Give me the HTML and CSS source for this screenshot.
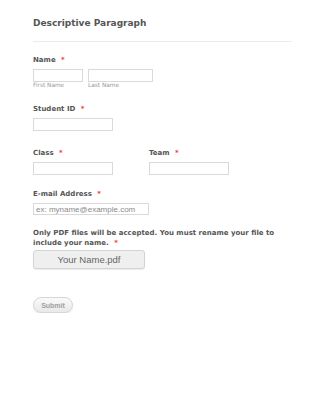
FILE: index.html
```html
<!DOCTYPE html>
<html lang="en">
<head>
  <meta charset="UTF-8">
  <meta name="viewport" content="width=device-width, initial-scale=1.0">
  <title>Descriptive Paragraph</title>
  <link rel="stylesheet" href="styles.css">
</head>
<body>
  <form class="form">
    <div class="form-header">
      <h1>Descriptive Paragraph</h1>
    </div>

    <div class="field field-name">
      <label class="label">Name <span class="req">*</span></label>
      <div class="name-row">
        <div class="sub">
          <input class="input input-first" type="text">
          <span class="sublabel">First Name</span>
        </div>
        <div class="sub">
          <input class="input input-last" type="text">
          <span class="sublabel">Last Name</span>
        </div>
      </div>
    </div>

    <div class="field field-id">
      <label class="label">Student ID <span class="req">*</span></label>
      <input class="input input-md" type="text">
    </div>

    <div class="field field-cols">
      <div class="col">
        <label class="label">Class <span class="req">*</span></label>
        <input class="input input-md" type="text">
      </div>
      <div class="col">
        <label class="label">Team <span class="req">*</span></label>
        <input class="input input-md" type="text">
      </div>
    </div>

    <div class="field field-email">
      <label class="label">E-mail Address <span class="req">*</span></label>
      <input class="input input-email" type="text" placeholder="ex: myname@example.com">
    </div>

    <div class="field field-file">
      <label class="label label-long">Only PDF files will be accepted. You must rename your file to include your name. <span class="req">*</span></label>
      <button class="file-btn" type="button">Your Name.pdf</button>
    </div>

    <div class="field field-submit">
      <button class="submit" type="button">Submit</button>
    </div>
  </form>
</body>
</html>
```

FILE: styles.css
```css
:root {
  --text: #555555;
  --muted: #9a9a9a;
  --border: #d9d9d9;
  --req: #f23a3c;
}
body {
  margin: 0;
  background: #ffffff;
  font-family: 'DejaVu Sans', Verdana, sans-serif;
  color: var(--text);
}
.form {
  width: 259px;
  padding: 17px 33px 0;
}
.form-header h1 {
  margin: 0;
  padding-bottom: 12px;
  font-size: 9px;
  line-height: 12px;
  font-weight: bold;
  color: var(--text);
  border-bottom: 1px solid #ebebeb;
}
.field {
  margin-top: 16px;
}
.field-name {
  margin-top: 14px;
}
.field-cols {
  display: flex;
  margin-top: 18px;
}
.field-email {
  margin-top: 15px;
}
.field-file {
  margin-top: 14px;
}
.field-submit {
  margin-top: 28px;
}
.col {
  width: 116px;
}
.label {
  display: block;
  font-size: 7px;
  line-height: 9px;
  font-weight: bold;
  margin-bottom: 4px;
}
.label-long {
  line-height: 10px;
  margin-top: -1px;
  margin-bottom: 2px;
}
.req {
  color: var(--req);
  margin-left: 3px;
}
.name-row {
  display: flex;
  gap: 5px;
}
.sub {
  display: flex;
  flex-direction: column;
}
.sublabel {
  font-size: 5.8px;
  line-height: 7px;
  color: var(--muted);
}
.input {
  display: block;
  box-sizing: border-box;
  height: 13px;
  margin: 0;
  padding: 0 2px;
  border: 1px solid var(--border);
  background: #fff;
  font-family: 'Liberation Sans', Arial, sans-serif;
  font-size: 8px;
}
.input::placeholder {
  color: #8a8a8a;
}
.input-first { width: 50px; }
.input-last { width: 65px; }
.input-md { width: 80px; }
.input-email { width: 116px; height: 12px; }
.file-btn {
  display: block;
  box-sizing: border-box;
  width: 112px;
  height: 19px;
  margin: 0;
  padding: 0;
  border: 1px solid #d3d3d3;
  border-radius: 3px;
  background: #efefef;
  box-shadow: 0 1px 1px rgba(0, 0, 0, 0.08);
  font-family: 'Liberation Sans', Arial, sans-serif;
  font-size: 9.5px;
  color: #666666;
}
.submit {
  display: block;
  box-sizing: border-box;
  width: 40px;
  height: 16px;
  margin: 0;
  padding: 0;
  border: 1px solid #d6d6d6;
  border-radius: 8px;
  background: linear-gradient(#fafafa, #e9e9e9);
  box-shadow: 0 1px 1px rgba(0, 0, 0, 0.1);
  font-family: 'Liberation Sans', Arial, sans-serif;
  font-size: 7px;
  font-weight: bold;
  color: #a0a0a0;
}
```
